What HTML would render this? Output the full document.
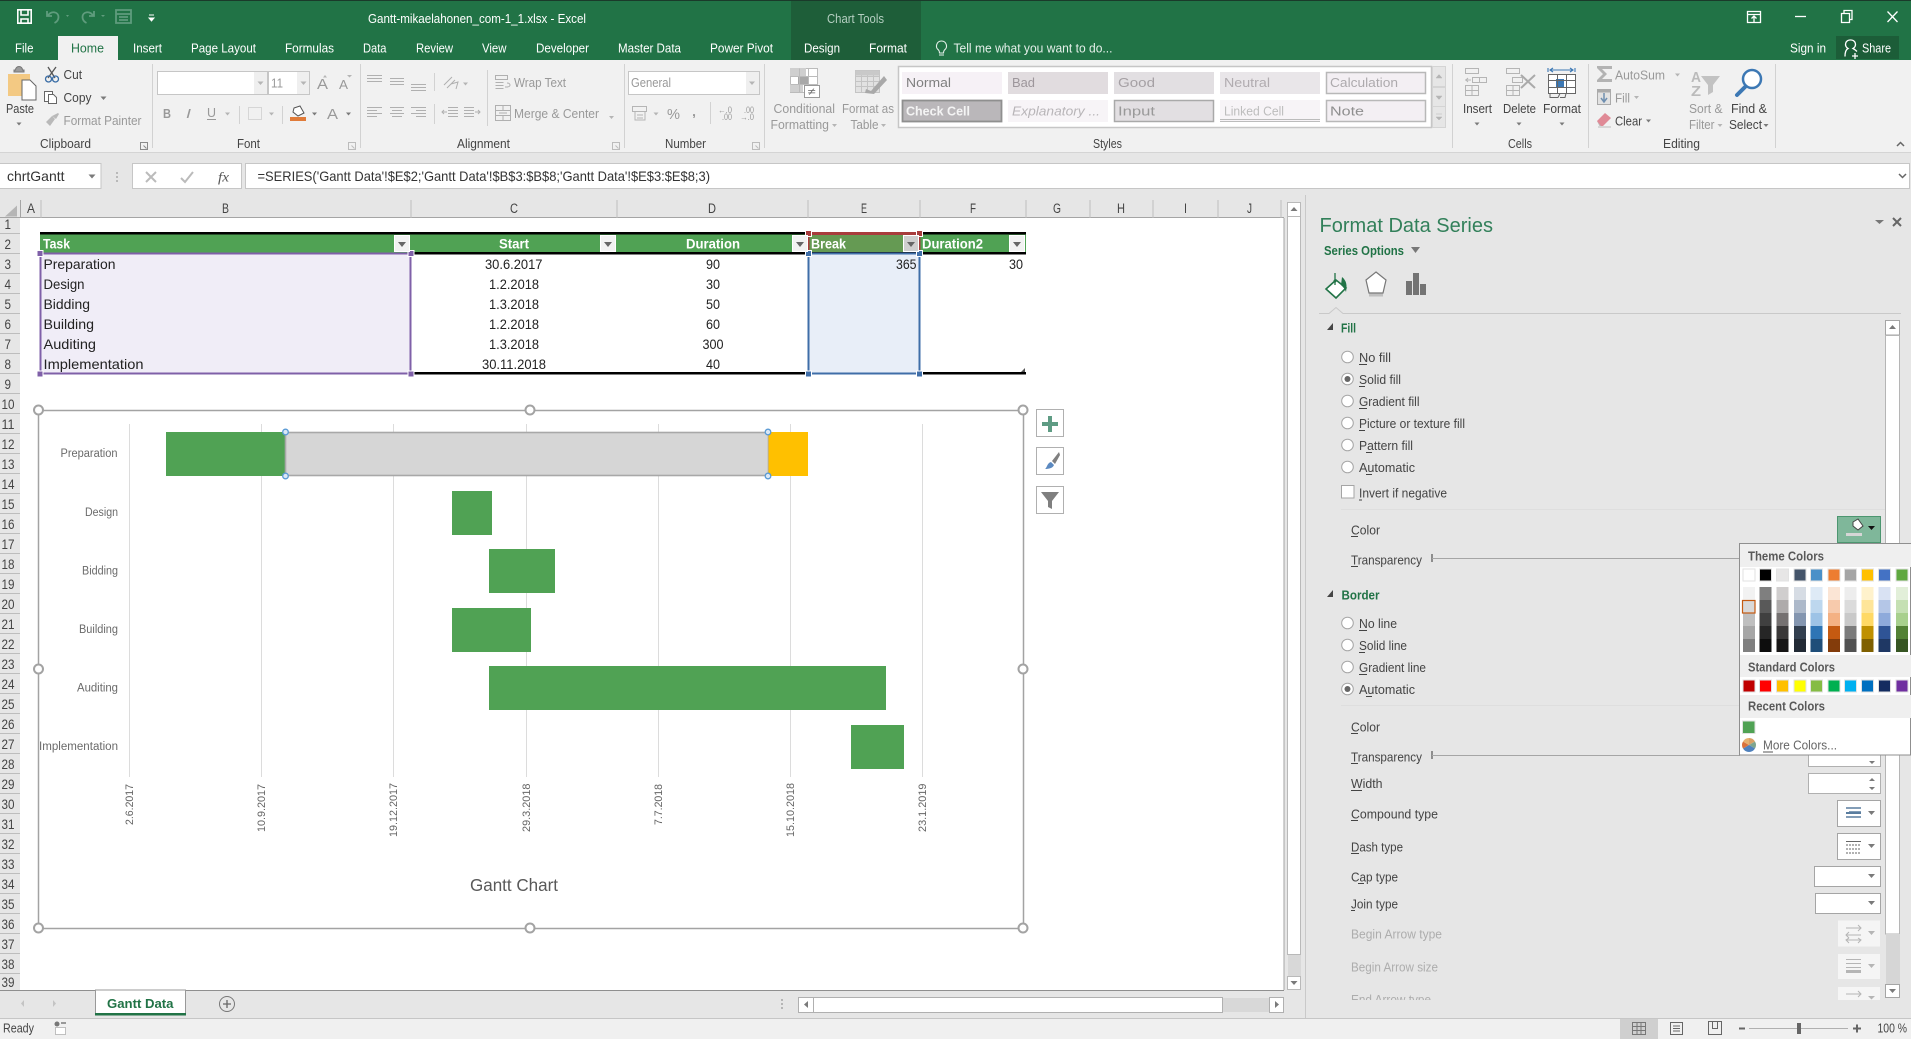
<!DOCTYPE html>
<html><head><meta charset="utf-8"><title>Gantt-mikaelahonen_com-1_1.xlsx - Excel</title>
<style>
html,body{margin:0;padding:0;background:#fff;overflow:hidden}
svg{display:block}
#root{filter:blur(.3px)}
text{font-family:"Liberation Sans",sans-serif;font-size:13px;fill:#444;white-space:pre}
.w{fill:#fff}.lg{fill:#e4efe9}.d{fill:#999}.m{fill:#666}.f{fill:#b0b0b0}
.c{font-size:14px;fill:#222}.h{font-size:14px;fill:#fff;font-weight:bold}
.r{font-size:13.5px;fill:#444}.p{font-size:12.5px;fill:#444}.pd{font-size:12.5px;fill:#adadad}
.sec{font-size:12.5px;fill:#217346;font-weight:bold}
.y{font-size:11.5px;fill:#6a6a6a}.x{font-size:11px;fill:#666}
.pop{font-size:12.5px;font-weight:bold;fill:#595959}
.ln{fill:none;stroke:#8f8f8f;stroke-width:1.2}
.ar{fill:#7a7a7a}.ad{fill:#b5b5b5}
.hd{fill:#fff;stroke:#a3a3a3;stroke-width:2}
.bh{fill:#dbe8f5;stroke:#5b9bd5;stroke-width:1.3}
.fb{fill:#f2f2f2;stroke:#fff}
</style></head><body>
<svg id="root" xmlns="http://www.w3.org/2000/svg" width="1911" height="1039" viewBox="0 0 1911 1039">
<!-- title bar -->
<rect width="1911" height="60" fill="#217346"/>
<rect width="1911" height="1" fill="#1a3a2a"/>
<rect x="791" y="1" width="130" height="59" fill="#1e5e39"/>
<rect x="58" y="36" width="60" height="24" fill="#f1f1f1"/>
<rect x="1836" y="36" width="63" height="23" fill="#1c5d38"/>
<!-- QAT -->
<g fill="none" stroke="#fff" stroke-width="1.6"><path d="M17.8 9.8h13.4v13.4h-13.4z"/><path d="M21 10v5h7v-5M21 23v-4h7v4"/></g>
<g fill="none" stroke="#5f9c7d" stroke-width="1.8"><path d="M47 11v5h5M47.500 16c4-6 11-4 11 1 0 3-2 5-4 6"/><path d="M94 11v5h-5M93.500 16c-4-6-11-4-11 1 0 3 2 5 4 6"/><path d="M116 10h15v13h-15zM116 14h15M119 17h9M119 20h9"/></g>
<path d="M66 15l3 0-1.500 2zM101 15l4 0-2 2z" fill="#5f9c7d"/>
<path d="M149 15h5M149 18h5l-2.500 3z" stroke="#fff" fill="#fff" stroke-width="1"/>
<text class="w" x="368" y="23" textLength="218" lengthAdjust="spacingAndGlyphs">Gantt-mikaelahonen_com-1_1.xlsx - Excel</text>
<text x="827" y="23" textLength="57" lengthAdjust="spacingAndGlyphs" style="fill:#b5cfc1">Chart Tools</text>
<!-- window buttons -->
<g fill="none" stroke="#fff" stroke-width="1.300"><path d="M1747.500 11.500h13v11h-13zM1747.500 14.500h13M1754 22v-6M1751.500 18.500l2.500-2.500 2.500 2.500"/><path d="M1795 16.500h11"/><path d="M1841.500 13.500h8v9h-8zM1844 13v-2.500h8v9h-2.500"/><path d="M1887.500 11.500l10 10.500M1897.500 11.500l-10 10.500"/></g>
<!-- tabs -->
<text class="w" x="15" y="52.500" textLength="18.500" lengthAdjust="spacingAndGlyphs">File</text>
<text x="71" y="52.500" textLength="33" lengthAdjust="spacingAndGlyphs" style="fill:#217346">Home</text>
<text class="w" x="133" y="52.500" textLength="29" lengthAdjust="spacingAndGlyphs">Insert</text>
<text class="w" x="191" y="52.500" textLength="65" lengthAdjust="spacingAndGlyphs">Page Layout</text>
<text class="w" x="285" y="52.500" textLength="49" lengthAdjust="spacingAndGlyphs">Formulas</text>
<text class="w" x="363" y="52.500" textLength="23.500" lengthAdjust="spacingAndGlyphs">Data</text>
<text class="w" x="416" y="52.500" textLength="37" lengthAdjust="spacingAndGlyphs">Review</text>
<text class="w" x="482" y="52.500" textLength="24.500" lengthAdjust="spacingAndGlyphs">View</text>
<text class="w" x="536" y="52.500" textLength="53" lengthAdjust="spacingAndGlyphs">Developer</text>
<text class="w" x="618" y="52.500" textLength="63" lengthAdjust="spacingAndGlyphs">Master Data</text>
<text class="w" x="710" y="52.500" textLength="63" lengthAdjust="spacingAndGlyphs">Power Pivot</text>
<text class="w" x="804" y="52.500" textLength="36" lengthAdjust="spacingAndGlyphs">Design</text>
<text class="w" x="869" y="52.500" textLength="38" lengthAdjust="spacingAndGlyphs">Format</text>
<path d="M941.500 41a5 5 0 0 1 3 9c-1 1-1 2-1 3h-4c0-1 0-2-1-3a5 5 0 0 1 3-9zM939 55h5" fill="none" stroke="#e4efe9" stroke-width="1.100"/>
<text class="lg" x="953.500" y="52.500" textLength="159" lengthAdjust="spacingAndGlyphs">Tell me what you want to do...</text>
<text class="w" x="1790" y="52.500" textLength="36" lengthAdjust="spacingAndGlyphs">Sign in</text>
<path d="M1850.500 40a4.500 4.500 0 0 1 2.500 8.500c2 1 3 2 4 3M1850.500 40a4.500 4.500 0 0 0-2.500 8.500c-2 1-3 3-3 8M1855 53v6M1852 56h6" fill="none" stroke="#fff" stroke-width="1.300"/>
<text class="w" x="1862" y="52.500" textLength="29" lengthAdjust="spacingAndGlyphs">Share</text>
<!-- ribbon -->
<rect y="60" width="1911" height="93" fill="#f1f1f1"/>
<rect y="152" width="1911" height="1" fill="#d4d4d4"/>
<g fill="#d2d2d2"><rect x="152" y="64" width="1" height="84"/><rect x="360" y="64" width="1" height="84"/><rect x="624" y="64" width="1" height="84"/><rect x="764" y="64" width="1" height="84"/><rect x="1452" y="64" width="1" height="84"/><rect x="1588" y="64" width="1" height="84"/><rect x="1775" y="64" width="1" height="84"/></g>
<g class="t" >
<text x="40" y="148" textLength="51" lengthAdjust="spacingAndGlyphs">Clipboard</text>
<text x="237" y="148" textLength="23" lengthAdjust="spacingAndGlyphs">Font</text>
<text x="457" y="148" textLength="53" lengthAdjust="spacingAndGlyphs">Alignment</text>
<text x="665" y="148" textLength="41" lengthAdjust="spacingAndGlyphs">Number</text>
<text x="1093" y="148" textLength="29" lengthAdjust="spacingAndGlyphs">Styles</text>
<text x="1508" y="148" textLength="24" lengthAdjust="spacingAndGlyphs">Cells</text>
<text x="1663" y="148" textLength="37" lengthAdjust="spacingAndGlyphs">Editing</text>
</g>
<!-- launchers -->
<g fill="none" stroke="#8a8a8a"><path d="M140.500 142.500h7v7h-7zM143.500 145.500l3 3"/></g>
<g fill="none" stroke="#bcbcbc"><path d="M348.500 142.500h7v7h-7zM351.500 145.500l3 3M612.500 142.500h7v7h-7zM615.500 145.500l3 3M752.500 142.500h7v7h-7zM755.500 145.500l3 3"/></g>
<!-- paste -->
<path d="M8 74h22v22h-22z" fill="#f3c983"/><path d="M14 72h10v-2h-1.500a3 3 0 0 0-7 0h-1.500z" fill="#9b9b9b" stroke="#777"/>
<path d="M22 80h8l6 6v14h-14z" fill="#fff" stroke="#666"/>
<text x="6" y="113" textLength="28" lengthAdjust="spacingAndGlyphs">Paste</text>
<path d="M16.500 122.500h5l-2.500 3z" class="ar"/>
<g fill="none" stroke="#555" stroke-width="1.300"><path d="M48 67l7 11M56 67l-8 11"/><circle cx="48.500" cy="79" r="3" stroke="#3a6da6"/><circle cx="55.500" cy="79" r="3" stroke="#3a6da6"/></g>
<text x="63.500" y="79" textLength="18.500" lengthAdjust="spacingAndGlyphs">Cut</text>
<g fill="#fff" stroke="#666"><path d="M44.500 91.500h8v10h-8z"/><path d="M48.500 94.500h5l3 3v6h-8z"/></g>
<text x="63.500" y="102" textLength="28" lengthAdjust="spacingAndGlyphs">Copy</text>
<path d="M100.500 96.500h6l-3 3.500z" class="ar"/>
<path d="M46 122l6-6 3 3-5 7zM52 116l6-3 1 1-3 5z" fill="#b9b9b9"/>
<text class="d" x="63.500" y="125" textLength="78" lengthAdjust="spacingAndGlyphs">Format Painter</text>
<!-- font -->
<g fill="#fff" stroke="#c6c6c6"><rect x="157.500" y="71.500" width="110" height="23"/><rect x="268.500" y="71.500" width="41" height="23"/></g>
<rect x="254" y="72" width="13" height="22" fill="#efefef"/><rect x="297" y="72" width="12" height="22" fill="#efefef"/>
<path d="M257.500 81.500h6l-3 3.500zM300.500 81.500h6l-3 3.500z" class="ad"/>
<text class="d" x="271" y="87.500" textLength="12" lengthAdjust="spacingAndGlyphs">11</text>
<text class="d" x="317" y="89" textLength="11" lengthAdjust="spacingAndGlyphs" style="font-size:15px">A</text><text class="d" x="339" y="89" textLength="9" lengthAdjust="spacingAndGlyphs">A</text>
<path d="M325 75l2 2.500h-4zM349 77l-2 2.500h-0zM347 75h5l-2.500 2.500z" class="ad"/>
<text class="d" x="163" y="118" style="font-weight:bold" textLength="8" lengthAdjust="spacingAndGlyphs">B</text>
<text class="d" x="186" y="118" style="font-style:italic" textLength="5" lengthAdjust="spacingAndGlyphs">I</text>
<text class="d" x="207" y="117" textLength="9" lengthAdjust="spacingAndGlyphs">U</text><rect x="207" y="119" width="9" height="1" fill="#999"/>
<path d="M225 112.500h5l-2.500 3zM269 112.500h5l-2.500 3z" class="ad"/>
<rect x="239" y="106" width="1" height="18" fill="#d2d2d2"/><rect x="282" y="106" width="1" height="18" fill="#d2d2d2"/>
<path d="M248.500 107.500h13v12h-13z" fill="none" stroke="#bbb" stroke-dasharray="1 1"/>
<path d="M294 108l6-2 4 7-6 3-5-4z" fill="#fff" stroke="#555"/><rect x="290" y="117" width="16" height="4" fill="#e07b39"/>
<path d="M312 112.500h5l-2.500 3z" class="ar"/>
<text class="d" x="327" y="119" textLength="11" lengthAdjust="spacingAndGlyphs" style="font-size:15px">A</text>
<path d="M346 112.500h5l-2.500 3z" class="ar"/>
<!-- alignment -->
<g stroke="#b0b0b0" stroke-width="1" fill="none">
<path d="M367 75.500h15M367 78.500h15M367 81.500h15M390 78.500h14M390 81.500h14M390 84.500h14M411 84.500h15M411 87.500h15M411 90.500h15"/>
<path d="M367 107.500h15M367 110.500h10M367 113.500h15M367 116.500h10M390 107.500h14M392 110.500h10M390 113.500h14M392 116.500h10M411 107.500h15M416 110.500h10M411 113.500h15M416 116.500h10"/>
<path d="M448 107.500h10M448 110.500h10M448 113.500h10M448 116.500h10M442 112h5M444 110l-2 2 2 2M464 107.500h10M464 110.500h10M464 113.500h10M464 116.500h10M475 112h5M478 110l2 2-2 2"/>
<path d="M495.500 75.500h12v4h-12zM495.500 82.500h8M495.500 85.500h8M495.500 88.500h8M507 83c4 0 4 4 0 4M505 87h3"/>
<path d="M495.500 105.500h15v15h-15zM495.500 110.500h15M495.500 115.500h15M503 105v5M503 115v5M499 113h8"/>
<path d="M444 85l8-8M447 88l8-8M451 84l7-2-2 7"/>
</g>
<path d="M463 82.500h5l-2.500 3zM609 116h5l-2.500 3z" class="ad"/>
<rect x="434" y="73" width="1" height="18" fill="#d2d2d2"/><rect x="434" y="104" width="1" height="20" fill="#d2d2d2"/><rect x="487" y="70" width="1" height="56" fill="#d2d2d2"/>
<text class="d" x="514" y="87" textLength="52" lengthAdjust="spacingAndGlyphs">Wrap Text</text>
<text class="d" x="514" y="118" textLength="85" lengthAdjust="spacingAndGlyphs">Merge &amp; Center</text>
<!-- number -->
<rect x="628.500" y="71.500" width="131" height="23" fill="#fff" stroke="#c6c6c6"/><rect x="746" y="72" width="13" height="22" fill="#efefef"/>
<path d="M749 81.500h6l-3 3.500z" class="ad"/>
<text class="d" x="631" y="87" textLength="40" lengthAdjust="spacingAndGlyphs">General</text>
<path d="M632.500 106.500h14v5h-14zM635 112v8h10v-8M637 115h6M637 118h6" fill="none" stroke="#b5b5b5"/>
<path d="M653.500 112.500h5l-2.500 3z" class="ad"/>
<text class="d" x="667" y="119" textLength="13" lengthAdjust="spacingAndGlyphs" style="font-size:15px">%</text>
<text class="d" x="692" y="116" style="font-weight:bold" textLength="4" lengthAdjust="spacingAndGlyphs">,</text>
<rect x="710" y="102" width="1" height="22" fill="#d2d2d2"/>
<text class="d" x="718" y="113" textLength="14" lengthAdjust="spacingAndGlyphs" style="font-size:9px">←.0</text><text class="d" x="722" y="120" textLength="10" lengthAdjust="spacingAndGlyphs" style="font-size:9px">.00</text>
<text class="d" x="744" y="113" textLength="10" lengthAdjust="spacingAndGlyphs" style="font-size:9px">.00</text><text class="d" x="740" y="120" textLength="14" lengthAdjust="spacingAndGlyphs" style="font-size:9px">→.0</text>
<!-- cond fmt -->
<g fill="#fff" stroke="#bbb"><path d="M790.500 68.500h27v24h-27z"/></g>
<path d="M790 68h16v8h-16zM798 76h11v8h-11zM790 84h13v8h-13z" fill="#cfcfcf"/><path d="M798 76h11v8h-11z" fill="#a8a8a8"/>
<path d="M790.500 76.500h27M790.500 84.500h27M799.500 68.500v24M808.500 68.500v24" stroke="#bbb" fill="none"/>
<rect x="804.500" y="85.500" width="15" height="12" fill="#fff" stroke="#999"/>
<text class="m" x="807.500" y="95" style="font-size:10px" textLength="8" lengthAdjust="spacingAndGlyphs">≠</text>
<text class="d" x="773.500" y="113" textLength="61.500" lengthAdjust="spacingAndGlyphs">Conditional</text>
<text class="d" x="770.500" y="129" textLength="58.500" lengthAdjust="spacingAndGlyphs">Formatting</text>
<path d="M832 124h5l-2.500 3zM881 124h5l-2.500 3z" class="ad"/>
<!-- format table -->
<rect x="855.500" y="70.500" width="24" height="22" fill="#e2e2e2" stroke="#c4c4c4"/>
<path d="M855.500 76.500h24M855.500 81.500h24M855.500 86.500h24M861.500 70.500v22M867.500 70.500v22M873.500 70.500v22" stroke="#c4c4c4" fill="none"/>
<rect x="855.500" y="70.500" width="24" height="5" fill="#c9c9c9"/>
<path d="M884 76l-13 15-5-2-1 4 9 1 13-14z" fill="#a9a9a9"/>
<text class="d" x="842" y="113" textLength="52" lengthAdjust="spacingAndGlyphs">Format as</text>
<text class="d" x="850.500" y="129" textLength="28" lengthAdjust="spacingAndGlyphs">Table</text>
<!-- styles gallery -->
<rect x="898.500" y="66.500" width="533" height="61" fill="#fff" stroke="#c6c6c6" stroke-width="1.500"/>
<rect x="902" y="72" width="100" height="22" fill="#f6f1f6"/>
<rect x="1008" y="72" width="100" height="22" fill="#e1dcdf"/>
<rect x="1114" y="72" width="100" height="22" fill="#e2dfe2"/>
<rect x="1220" y="72" width="100" height="22" fill="#e9e6e9"/>
<rect x="1326.500" y="72.500" width="99" height="21" fill="#f3eff3" stroke="#b8b8b8" stroke-width="1.500"/>
<rect x="902.500" y="100.500" width="99" height="21" fill="#bab7ba" stroke="#8f8f8f" stroke-width="1.800"/>
<rect x="1008" y="100" width="100" height="22" fill="#f7f4f7"/>
<rect x="1114.500" y="100.500" width="99" height="21" fill="#e2dfe2" stroke="#a9a9a9" stroke-width="1.500"/>
<rect x="1220" y="100" width="100" height="22" fill="#f7f4f7"/><path d="M1220 119.500h100M1220 121.500h100" stroke="#bcbcbc" fill="none"/>
<rect x="1326.500" y="100.500" width="99" height="21" fill="#f3eff3" stroke="#b8b8b8" stroke-width="1.500"/>
<text x="906" y="87" textLength="45" lengthAdjust="spacingAndGlyphs" style="fill:#7f7f7f">Normal</text>
<text x="1012" y="87" textLength="23" lengthAdjust="spacingAndGlyphs" style="fill:#9d969b">Bad</text>
<text x="1118" y="87" textLength="37" lengthAdjust="spacingAndGlyphs" style="fill:#a5a0a4">Good</text>
<text x="1224" y="87" textLength="46" lengthAdjust="spacingAndGlyphs" style="fill:#b1acb0">Neutral</text>
<text x="1330" y="87" textLength="68" lengthAdjust="spacingAndGlyphs" style="fill:#adaaad">Calculation</text>
<text x="906" y="115.500" textLength="64" lengthAdjust="spacingAndGlyphs" style="fill:#f4f4f4;font-weight:bold">Check Cell</text>
<text x="1012" y="115.500" textLength="88" lengthAdjust="spacingAndGlyphs" style="fill:#b8b5b8;font-style:italic">Explanatory ...</text>
<text x="1118" y="115.500" textLength="37" lengthAdjust="spacingAndGlyphs" style="fill:#999">Input</text>
<text x="1224" y="115.500" textLength="60" lengthAdjust="spacingAndGlyphs" style="fill:#bdbdbd">Linked Cell</text>
<text x="1330" y="115.500" textLength="34" lengthAdjust="spacingAndGlyphs" style="fill:#8f8f8f">Note</text>
<g fill="#e6e6e6" stroke="#d4d4d4"><rect x="1432.500" y="66.500" width="13" height="20"/><rect x="1432.500" y="87.500" width="13" height="19"/><rect x="1432.500" y="106.500" width="13" height="21"/></g>
<path d="M1436 78h6l-3-3.500zM1436 96h6l-3 3.500zM1436 114h6M1436 117h6l-3 3z" fill="#b5b5b5" stroke="#b5b5b5" stroke-width=".5"/>
<!-- cells -->
<g fill="none" stroke="#b5b5b5"><path d="M1465.500 68.500h13v5h-13zM1465.500 85.500h13v10h-13zM1465.500 90.500h13M1472 85.500v10M1472.500 77.500h14v5h-14zM1479.500 77.500v5M1465 80h6M1468 78l-2 2 2 2"/><path d="M1506.500 68.500h13v5h-13zM1506.500 85.500h13v10h-13zM1506.500 90.500h13M1513 85.500v10M1512.500 77.500h10v5h-10z"/><path d="M1521 75l14 13M1535 75l-14 13" stroke="#aaa" stroke-width="2"/></g>
<path d="M1548 68v4M1575 68v4M1550 70h23M1553 68l-3 2 3 2M1570 68l3 2-3 2" fill="none" stroke="#3c78b4" stroke-width="1.100"/>
<rect x="1548.500" y="74.500" width="27" height="19" fill="#fff"/>
<rect x="1556" y="79" width="8" height="9" fill="#3c78b4"/>
<g fill="none" stroke="#666"><path d="M1548.500 74.500h27v19h-27z"/><path d="M1548.500 80.500h27M1548.500 87.500h27M1557.500 74.500v19M1566.500 74.500v19M1550 93.500v4h8l2-4M1560 97.500h5l1-4"/></g>
<text x="1463" y="113" textLength="29" lengthAdjust="spacingAndGlyphs">Insert</text>
<text x="1503" y="113" textLength="33" lengthAdjust="spacingAndGlyphs">Delete</text>
<text x="1543" y="113" textLength="38" lengthAdjust="spacingAndGlyphs">Format</text>
<path d="M1474.500 122.500h5l-2.500 3zM1516.500 122.500h5l-2.500 3zM1559.500 122.500h5l-2.500 3z" class="ar"/>
<!-- editing -->
<path d="M1597 66h15v3h-10l5 5-5 5h10v3h-15v-2l6-6-6-6z" fill="#b3b3b3"/>
<text class="d" x="1615" y="79.500" textLength="50" lengthAdjust="spacingAndGlyphs">AutoSum</text>
<path d="M1675 73.500h5l-2.500 3zM1634 96h5l-2.500 3zM1717.500 124h5l-2.500 3z" class="ad"/>
<rect x="1597.500" y="89.500" width="13" height="15" fill="#e2e2e2" stroke="#aaa"/><rect x="1597.500" y="89.500" width="13" height="3" fill="#aaa"/><path d="M1604 93v8M1601 98l3 4 3-4" fill="none" stroke="#6f8fb0" stroke-width="1.500"/>
<text class="d" x="1615" y="102.500" textLength="15" lengthAdjust="spacingAndGlyphs">Fill</text>
<path d="M1597 121l8-8 6 5-8 8h-3z" fill="#e08a96"/><path d="M1597 121l4 5h-1.500z" fill="#bbb"/><path d="M1598 127h13" stroke="#bbb"/>
<text x="1615" y="125.500" textLength="27" lengthAdjust="spacingAndGlyphs">Clear</text>
<path d="M1646 119.500h5l-2.500 3zM1763.500 124h5l-2.500 3z" class="ar"/>
<text x="1691" y="82" textLength="10" lengthAdjust="spacingAndGlyphs" style="font-size:15px;fill:#bbb;font-weight:bold">A</text>
<text x="1691" y="96" textLength="10" lengthAdjust="spacingAndGlyphs" style="font-size:15px;fill:#bbb;font-weight:bold">Z</text>
<path d="M1701 76h19l-7 9v7l-5 3v-10z" fill="#c2c2c2"/>
<circle cx="1752" cy="79" r="9" fill="#fff" stroke="#3c78b4" stroke-width="2.500"/><path d="M1745 87l-8 8" stroke="#3c78b4" stroke-width="4" stroke-linecap="round"/>
<text class="d" x="1689" y="113" textLength="33.500" lengthAdjust="spacingAndGlyphs">Sort &amp;</text>
<text class="d" x="1689" y="129" textLength="25.500" lengthAdjust="spacingAndGlyphs">Filter</text>
<text x="1731" y="113" textLength="36" lengthAdjust="spacingAndGlyphs">Find &amp;</text>
<text x="1729" y="129" textLength="33" lengthAdjust="spacingAndGlyphs">Select</text>
<path d="M1897 146l3.500-3.500 3.500 3.500" fill="none" stroke="#666" stroke-width="1.500"/>
<!-- formula bar -->
<rect y="153" width="1911" height="42" fill="#e6e6e6"/>
<g fill="#fff" stroke="#c6c6c6"><rect x="-1" y="163.500" width="102" height="25"/><rect x="132.500" y="163.500" width="109" height="25"/><rect x="245.500" y="163.500" width="1664" height="25"/></g>
<text x="7" y="181" textLength="57.500" lengthAdjust="spacingAndGlyphs" style="font-size:14px;fill:#333">chrtGantt</text>
<path d="M88.500 174.500h7l-3.500 4z" class="ar"/>
<path d="M117 172v2M117 176v2M117 180v2" stroke="#aaa" stroke-width="1.500"/>
<path d="M146 172l10 10M156 172l-10 10M181 178l4 4 8-10" fill="none" stroke="#bbb" stroke-width="2"/>
<text x="218" y="181.500" textLength="11" lengthAdjust="spacingAndGlyphs" style="font-style:italic;font-family:'Liberation Serif',serif;font-size:14px;fill:#555">fx</text>
<text x="257.500" y="181" textLength="452.500" lengthAdjust="spacingAndGlyphs" style="font-size:14px;fill:#333">=SERIES('Gantt Data'!$E$2;'Gantt Data'!$B$3:$B$8;'Gantt Data'!$E$3:$E$8;3)</text>
<path d="M1899 174l3.500 3.500 3.500-3.500" fill="none" stroke="#666" stroke-width="1.500"/>
<!-- sheet -->
<rect y="195" width="1305" height="823" fill="#e6e6e6"/>
<rect x="20" y="218" width="1264" height="772" fill="#fff"/>
<rect x="0" y="218" width="20" height="772" fill="#e6e6e6"/>
<path d="M5 216.500l12-11v11z" fill="#b5b5b5"/>
<path d="M0 217.500h1284M20.500 200v18M1284 218v772" stroke="#a5a5a5" fill="none"/>
<path d="M41 200v18M411 200v18M617 200v18M808 200v18M920 200v18M1026 200v18M1090 200v18M1153 200v18M1218 200v18M1281 200v18" stroke="#bdbdbd" fill="none"/>
<g class="cols">
<text class="r" x="27" y="213" textLength="8" lengthAdjust="spacingAndGlyphs">A</text>
<text class="r" x="222" y="213" textLength="7" lengthAdjust="spacingAndGlyphs">B</text>
<text class="r" x="510" y="213" textLength="8" lengthAdjust="spacingAndGlyphs">C</text>
<text class="r" x="708" y="213" textLength="8" lengthAdjust="spacingAndGlyphs">D</text>
<text class="r" x="861" y="213" textLength="6" lengthAdjust="spacingAndGlyphs">E</text>
<text class="r" x="970" y="213" textLength="6" lengthAdjust="spacingAndGlyphs">F</text>
<text class="r" x="1053" y="213" textLength="8" lengthAdjust="spacingAndGlyphs">G</text>
<text class="r" x="1117" y="213" textLength="8" lengthAdjust="spacingAndGlyphs">H</text>
<text class="r" x="1184" y="213" textLength="3" lengthAdjust="spacingAndGlyphs">I</text>
<text class="r" x="1247" y="213" textLength="5" lengthAdjust="spacingAndGlyphs">J</text>
</g>
<path d="M0 233.500h20M0 253.500h20M0 273.500h20M0 293.500h20M0 313.500h20M0 333.500h20M0 353.500h20M0 373.500h20M0 393.500h20M0 413.500h20M0 433.500h20M0 453.500h20M0 473.500h20M0 493.500h20M0 513.500h20M0 533.500h20M0 553.500h20M0 573.500h20M0 593.500h20M0 613.500h20M0 633.500h20M0 653.500h20M0 673.500h20M0 693.500h20M0 713.500h20M0 733.500h20M0 753.500h20M0 773.500h20M0 793.500h20M0 813.500h20M0 833.500h20M0 853.500h20M0 873.500h20M0 893.500h20M0 913.500h20M0 933.500h20M0 953.500h20M0 973.500h20" stroke="#bdbdbd" fill="none"/>
<g>
<text class="r" x="4.500" y="229" textLength="6.500" lengthAdjust="spacingAndGlyphs">1</text>
<text class="r" x="4.500" y="249" textLength="6.500" lengthAdjust="spacingAndGlyphs">2</text>
<text class="r" x="4.500" y="269" textLength="6.500" lengthAdjust="spacingAndGlyphs">3</text>
<text class="r" x="4.500" y="289" textLength="6.500" lengthAdjust="spacingAndGlyphs">4</text>
<text class="r" x="4.500" y="309" textLength="6.500" lengthAdjust="spacingAndGlyphs">5</text>
<text class="r" x="4.500" y="329" textLength="6.500" lengthAdjust="spacingAndGlyphs">6</text>
<text class="r" x="4.500" y="349" textLength="6.500" lengthAdjust="spacingAndGlyphs">7</text>
<text class="r" x="4.500" y="369" textLength="6.500" lengthAdjust="spacingAndGlyphs">8</text>
<text class="r" x="4.500" y="389" textLength="6.500" lengthAdjust="spacingAndGlyphs">9</text>
<text class="r" x="1.500" y="409" textLength="13" lengthAdjust="spacingAndGlyphs">10</text>
<text class="r" x="1.500" y="429" textLength="13" lengthAdjust="spacingAndGlyphs">11</text>
<text class="r" x="1.500" y="449" textLength="13" lengthAdjust="spacingAndGlyphs">12</text>
<text class="r" x="1.500" y="469" textLength="13" lengthAdjust="spacingAndGlyphs">13</text>
<text class="r" x="1.500" y="489" textLength="13" lengthAdjust="spacingAndGlyphs">14</text>
<text class="r" x="1.500" y="509" textLength="13" lengthAdjust="spacingAndGlyphs">15</text>
<text class="r" x="1.500" y="529" textLength="13" lengthAdjust="spacingAndGlyphs">16</text>
<text class="r" x="1.500" y="549" textLength="13" lengthAdjust="spacingAndGlyphs">17</text>
<text class="r" x="1.500" y="569" textLength="13" lengthAdjust="spacingAndGlyphs">18</text>
<text class="r" x="1.500" y="589" textLength="13" lengthAdjust="spacingAndGlyphs">19</text>
<text class="r" x="1.500" y="609" textLength="13" lengthAdjust="spacingAndGlyphs">20</text>
<text class="r" x="1.500" y="629" textLength="13" lengthAdjust="spacingAndGlyphs">21</text>
<text class="r" x="1.500" y="649" textLength="13" lengthAdjust="spacingAndGlyphs">22</text>
<text class="r" x="1.500" y="669" textLength="13" lengthAdjust="spacingAndGlyphs">23</text>
<text class="r" x="1.500" y="689" textLength="13" lengthAdjust="spacingAndGlyphs">24</text>
<text class="r" x="1.500" y="709" textLength="13" lengthAdjust="spacingAndGlyphs">25</text>
<text class="r" x="1.500" y="729" textLength="13" lengthAdjust="spacingAndGlyphs">26</text>
<text class="r" x="1.500" y="749" textLength="13" lengthAdjust="spacingAndGlyphs">27</text>
<text class="r" x="1.500" y="769" textLength="13" lengthAdjust="spacingAndGlyphs">28</text>
<text class="r" x="1.500" y="789" textLength="13" lengthAdjust="spacingAndGlyphs">29</text>
<text class="r" x="1.500" y="809" textLength="13" lengthAdjust="spacingAndGlyphs">30</text>
<text class="r" x="1.500" y="829" textLength="13" lengthAdjust="spacingAndGlyphs">31</text>
<text class="r" x="1.500" y="849" textLength="13" lengthAdjust="spacingAndGlyphs">32</text>
<text class="r" x="1.500" y="869" textLength="13" lengthAdjust="spacingAndGlyphs">33</text>
<text class="r" x="1.500" y="889" textLength="13" lengthAdjust="spacingAndGlyphs">34</text>
<text class="r" x="1.500" y="909" textLength="13" lengthAdjust="spacingAndGlyphs">35</text>
<text class="r" x="1.500" y="929" textLength="13" lengthAdjust="spacingAndGlyphs">36</text>
<text class="r" x="1.500" y="949" textLength="13" lengthAdjust="spacingAndGlyphs">37</text>
<text class="r" x="1.500" y="969" textLength="13" lengthAdjust="spacingAndGlyphs">38</text>
<text class="r" x="1.500" y="987" textLength="13" lengthAdjust="spacingAndGlyphs">39</text>
</g>
<!-- table -->
<rect x="40" y="233" width="986" height="20" fill="#50a254"/>
<rect x="40" y="232" width="986" height="2.500" fill="#000"/>
<rect x="411" y="252" width="615" height="2.500" fill="#000"/>
<rect x="411" y="372" width="615" height="2.500" fill="#000"/>
<rect x="809" y="235" width="110" height="17" fill="#659a53"/>
<path d="M809 233.500h110" stroke="#a83c3c" stroke-width="3"/><path d="M808.500 234v19M919.500 234v19" stroke="#a83c3c" stroke-width="2"/>
<rect x="41" y="254" width="369" height="119" fill="#f0edf7"/>
<rect x="809" y="254" width="110" height="119" fill="#e8eef8"/>
<rect x="40.500" y="253.500" width="370" height="120" fill="none" stroke="#7f60a8" stroke-width="2"/>
<rect x="808.500" y="253.500" width="111" height="120" fill="none" stroke="#3f6ea8" stroke-width="2"/>
<g fill="#7f60a8" stroke="#fff"><rect x="37" y="250.500" width="6" height="6"/><rect x="408" y="250.500" width="6" height="6"/><rect x="37" y="371" width="6" height="6"/><rect x="408" y="371" width="6" height="6"/></g>
<g fill="#3f6ea8" stroke="#fff"><rect x="805.500" y="250.500" width="6" height="6"/><rect x="916.500" y="250.500" width="6" height="6"/><rect x="805.500" y="371" width="6" height="6"/><rect x="916.500" y="371" width="6" height="6"/></g>
<g fill="#a83c3c" stroke="#fff"><rect x="805.500" y="230.500" width="6" height="6"/><rect x="916.500" y="230.500" width="6" height="6"/></g>
<text class="h" x="43" y="248.500" textLength="27" lengthAdjust="spacingAndGlyphs">Task</text>
<text class="h" x="499" y="248.500" textLength="30" lengthAdjust="spacingAndGlyphs">Start</text>
<text class="h" x="686" y="248.500" textLength="54" lengthAdjust="spacingAndGlyphs">Duration</text>
<text class="h" x="811" y="248.500" textLength="35" lengthAdjust="spacingAndGlyphs">Break</text>
<text class="h" x="922" y="248.500" textLength="61" lengthAdjust="spacingAndGlyphs">Duration2</text>
<g class="fb"><rect x="394.500" y="235.500" width="15" height="16"/><rect x="600.500" y="235.500" width="15" height="16"/><rect x="792.500" y="235.500" width="15" height="16"/><rect x="903.500" y="235.500" width="15" height="16" style="fill:#cfcfcf"/><rect x="1009.500" y="235.500" width="15" height="16"/></g>
<path d="M398 242h8l-4 5zM604 242h8l-4 5zM796 242h8l-4 5zM907 242h8l-4 5zM1013 242h8l-4 5z" fill="#666"/>
<text class="c" x="43.500" y="269" textLength="72" lengthAdjust="spacingAndGlyphs">Preparation</text>
<text class="c" x="43.500" y="289" textLength="41" lengthAdjust="spacingAndGlyphs">Design</text>
<text class="c" x="43.500" y="309" textLength="46.500" lengthAdjust="spacingAndGlyphs">Bidding</text>
<text class="c" x="43.500" y="329" textLength="50.500" lengthAdjust="spacingAndGlyphs">Building</text>
<text class="c" x="43.500" y="349" textLength="52.500" lengthAdjust="spacingAndGlyphs">Auditing</text>
<text class="c" x="43.500" y="369" textLength="100" lengthAdjust="spacingAndGlyphs">Implementation</text>
<text class="c" x="485" y="269" textLength="57.500" lengthAdjust="spacingAndGlyphs">30.6.2017</text>
<text class="c" x="489" y="289" textLength="50" lengthAdjust="spacingAndGlyphs">1.2.2018</text>
<text class="c" x="489" y="309" textLength="50" lengthAdjust="spacingAndGlyphs">1.3.2018</text>
<text class="c" x="489" y="329" textLength="50" lengthAdjust="spacingAndGlyphs">1.2.2018</text>
<text class="c" x="489" y="349" textLength="50" lengthAdjust="spacingAndGlyphs">1.3.2018</text>
<text class="c" x="482" y="369" textLength="64" lengthAdjust="spacingAndGlyphs">30.11.2018</text>
<text class="c" x="706" y="269" textLength="14" lengthAdjust="spacingAndGlyphs">90</text>
<text class="c" x="706" y="289" textLength="14" lengthAdjust="spacingAndGlyphs">30</text>
<text class="c" x="706" y="309" textLength="14" lengthAdjust="spacingAndGlyphs">50</text>
<text class="c" x="706" y="329" textLength="14" lengthAdjust="spacingAndGlyphs">60</text>
<text class="c" x="702.500" y="349" textLength="21" lengthAdjust="spacingAndGlyphs">300</text>
<text class="c" x="706" y="369" textLength="14" lengthAdjust="spacingAndGlyphs">40</text>
<text class="c" x="896" y="269" textLength="20.500" lengthAdjust="spacingAndGlyphs">365</text>
<text class="c" x="1009" y="269" textLength="14" lengthAdjust="spacingAndGlyphs">30</text>
<path d="M1021 372l4-4v4z" fill="#555"/>
<!-- chart -->
<path d="M38.500 410.500h985v518h-985z" fill="#fff" stroke="#a3a3a3" stroke-width="1.500"/>
<path d="M129.500 424v353M261.500 424v353M393.500 424v353M526.500 424v353M658.500 424v353M790.500 424v353M922.500 424v353" stroke="#dcdcdc" fill="none"/>
<g fill="#50a254">
<rect x="166" y="432" width="119" height="44"/>
<rect x="452" y="491" width="40" height="44"/>
<rect x="489" y="549" width="66" height="44"/>
<rect x="452" y="608" width="79" height="44"/>
<rect x="489" y="666" width="397" height="44"/>
<rect x="851" y="725" width="53" height="44"/>
</g>
<rect x="285.500" y="432.500" width="483" height="43" fill="#d6d6d6" stroke="#a8a8a8" stroke-width="1.600"/>
<rect x="768.500" y="432" width="39.500" height="44" fill="#ffc000"/>
<circle class="bh" cx="285.500" cy="432" r="2.800"/><circle class="bh" cx="285.500" cy="476" r="2.800"/><circle class="bh" cx="768" cy="432" r="2.800"/><circle class="bh" cx="768" cy="476" r="2.800"/>
<text class="y" x="60.500" y="457" textLength="57" lengthAdjust="spacingAndGlyphs">Preparation</text>
<text class="y" x="85" y="516" textLength="33" lengthAdjust="spacingAndGlyphs">Design</text>
<text class="y" x="82" y="574.500" textLength="36" lengthAdjust="spacingAndGlyphs">Bidding</text>
<text class="y" x="79" y="633" textLength="39" lengthAdjust="spacingAndGlyphs">Building</text>
<text class="y" x="77" y="691.500" textLength="41" lengthAdjust="spacingAndGlyphs">Auditing</text>
<text class="y" x="39" y="750" textLength="79" lengthAdjust="spacingAndGlyphs">Implementation</text>
<text class="x" transform="translate(133 825) rotate(-90)" textLength="41" lengthAdjust="spacingAndGlyphs">2.6.2017</text>
<text class="x" transform="translate(265 832) rotate(-90)" textLength="48" lengthAdjust="spacingAndGlyphs">10.9.2017</text>
<text class="x" transform="translate(397 837) rotate(-90)" textLength="54" lengthAdjust="spacingAndGlyphs">19.12.2017</text>
<text class="x" transform="translate(530 832) rotate(-90)" textLength="48.500" lengthAdjust="spacingAndGlyphs">29.3.2018</text>
<text class="x" transform="translate(662 825) rotate(-90)" textLength="41" lengthAdjust="spacingAndGlyphs">7.7.2018</text>
<text class="x" transform="translate(794 837) rotate(-90)" textLength="54" lengthAdjust="spacingAndGlyphs">15.10.2018</text>
<text class="x" transform="translate(926 832) rotate(-90)" textLength="48.500" lengthAdjust="spacingAndGlyphs">23.1.2019</text>
<text x="470" y="891" textLength="88" lengthAdjust="spacingAndGlyphs" style="font-size:17.500px;fill:#595959">Gantt Chart</text>
<circle class="hd" cx="38.500" cy="410" r="4.500"/><circle class="hd" cx="530" cy="410" r="4.500"/><circle class="hd" cx="1023" cy="410" r="4.500"/><circle class="hd" cx="38.500" cy="669" r="4.500"/><circle class="hd" cx="1023" cy="669" r="4.500"/><circle class="hd" cx="38.500" cy="928" r="4.500"/><circle class="hd" cx="530" cy="928" r="4.500"/><circle class="hd" cx="1023" cy="928" r="4.500"/>
<g fill="#fff" stroke="#b0b0b0"><rect x="1036.500" y="409.500" width="27" height="27"/><rect x="1036.500" y="447.500" width="27" height="27"/><rect x="1036.500" y="486.500" width="27" height="27"/></g>
<path d="M1048 416h4v6h6v4h-6v6h-4v-6h-6v-4h6z" fill="#5f9c84"/>
<path d="M1059 452l-7 9 3 3 5-9z" fill="#7f7f7f"/><path d="M1051 462l3 3c-1 3-5 4-9 4 2-1 2-6 6-7z" fill="#5b89c0"/>
<path d="M1041 492h18l-7 9v8l-4-2v-6z" fill="#7f7f7f"/>
<!-- sheet scrollbar -->
<rect x="1287.500" y="202.500" width="13" height="14" fill="#fff" stroke="#b9b9b9"/><path d="M1290.500 211h7l-3.500-4z" class="ar"/>
<rect x="1287.500" y="216.500" width="13" height="738" fill="#fff" stroke="#b9b9b9"/>
<rect x="1288" y="955" width="13" height="22" fill="#d8d8d8"/>
<rect x="1287.500" y="976.500" width="13" height="13" fill="#fff" stroke="#b9b9b9"/><path d="M1290.500 981h7l-3.500 4z" class="ar"/>
<!-- sheet tabs -->
<rect x="20" y="990" width="1264" height="1" fill="#8f8f8f"/><rect y="990" width="20" height="1" fill="#8f8f8f"/>
<path d="M24 1000v7l-3-3.500zM53 1000v7l3-3.500z" fill="#c4c4c4"/>
<rect x="95.500" y="990" width="90" height="25" fill="#fff" stroke="#999"/>
<rect x="95" y="1013" width="91" height="2.500" fill="#217346"/>
<text x="107" y="1008" textLength="66.500" lengthAdjust="spacingAndGlyphs" style="fill:#217346;font-weight:bold">Gantt Data</text>
<circle cx="227" cy="1004" r="7.500" fill="none" stroke="#777"/><path d="M223 1004h8M227 1000v8" stroke="#666" stroke-width="1.300"/>
<path d="M782 999v2M782 1003v2M782 1007v2" stroke="#b5b5b5" stroke-width="2"/>
<rect x="798.500" y="997.500" width="15" height="15" fill="#fff" stroke="#b0b0b0"/><path d="M808 1001v7l-4-3.500z" class="ar"/>
<rect x="813.500" y="997.500" width="409" height="15" fill="#fff" stroke="#b0b0b0"/>
<rect x="1223" y="998" width="46" height="14" fill="#d8d8d8"/>
<rect x="1269.500" y="997.500" width="14" height="15" fill="#fff" stroke="#b0b0b0"/><path d="M1275 1001v7l4-3.500z" class="ar"/>
<!-- status bar -->
<rect y="1018" width="1911" height="21" fill="#f0f0f0"/>
<rect y="1018" width="1911" height="1" fill="#c6c6c6"/>
<text x="3" y="1032.500" textLength="31" lengthAdjust="spacingAndGlyphs">Ready</text>
<circle cx="57" cy="1024" r="2.500" fill="#777"/><rect x="55.500" y="1027.500" width="10" height="7" fill="#fff" stroke="#888" stroke-dasharray="1 1"/><rect x="61" y="1022" width="5" height="2" fill="#999"/>
<rect x="1620" y="1019" width="38" height="20" fill="#cfcfcf"/>
<path d="M1632.500 1022.500h13v12h-13zM1632.500 1026.500h13M1632.500 1030.500h13M1637 1022.500v12M1641 1022.500v12" fill="none" stroke="#777"/>
<path d="M1670.500 1022.500h12v12h-12zM1673 1026h7M1673 1028.500h7M1673 1031h7" fill="none" stroke="#666"/>
<path d="M1708.500 1021.500h13v13h-13zM1712.500 1021.500v7h5v-7" fill="none" stroke="#666"/>
<path d="M1739 1028.500h6" stroke="#666" stroke-width="2"/>
<path d="M1749 1028.500h99" stroke="#b0b0b0"/><rect x="1797" y="1023" width="4" height="11" fill="#666"/>
<path d="M1853 1028.500h8M1857 1024.500v8" stroke="#666" stroke-width="2"/>
<text x="1877.500" y="1032.500" textLength="29.500" lengthAdjust="spacingAndGlyphs">100 %</text>
<!-- task pane -->
<rect x="1305" y="195" width="606" height="823" fill="#e6e6e6"/>
<rect x="1305" y="195" width="1" height="823" fill="#c9c9c9"/>
<text x="1319.500" y="232" textLength="173.500" lengthAdjust="spacingAndGlyphs" style="font-size:20px;fill:#32805a">Format Data Series</text>
<path d="M1875 220h9l-4.500 4z" fill="#777"/><path d="M1893 218l8 8M1901 218l-8 8" stroke="#666" stroke-width="2"/>
<text x="1324" y="255" textLength="80" lengthAdjust="spacingAndGlyphs" style="font-size:12.500px;fill:#217346;font-weight:bold">Series Options</text>
<path d="M1411 247h9l-4.500 6z" fill="#777"/>
<path d="M1336 280l-10 9 10 9 10-10z" fill="#fff" stroke="#217346" stroke-width="1.600"/><path d="M1335 273v12" stroke="#217346" stroke-width="1.300"/><circle cx="1335" cy="281" r="1.500" fill="#217346"/><path d="M1342 277c5 4 5 9 4 15-1-3-3-5-5-7z" fill="#217346"/>
<path d="M1376 272l10 8-3 13h-14l-3-13z" fill="#fff" stroke="#777" stroke-width="1.200"/><path d="M1369 295h14" stroke="#999" stroke-width="3" opacity=".5"/>
<path d="M1406 281h6v14h-6zM1413 273h6v22h-6zM1420 284h6v11h-6z" fill="#747474"/>
<path d="M1319 313.500h10l7-6 7 6h558" fill="none" stroke="#c9c9c9"/>
<path d="M1333 323v7h-6z" fill="#444"/>
<text class="sec" x="1341" y="332.500" textLength="15" lengthAdjust="spacingAndGlyphs">Fill</text>
<g fill="#fff" stroke="#a5a5a5"><circle cx="1347.500" cy="357" r="5.800"/><circle cx="1347.500" cy="379" r="5.800"/><circle cx="1347.500" cy="401" r="5.800"/><circle cx="1347.500" cy="423" r="5.800"/><circle cx="1347.500" cy="445" r="5.800"/><circle cx="1347.500" cy="467" r="5.800"/></g>
<circle cx="1347.500" cy="379" r="3" fill="#666"/>
<text class="p" x="1359" y="362" textLength="32" lengthAdjust="spacingAndGlyphs">No fill</text>
<text class="p" x="1359" y="384" textLength="42" lengthAdjust="spacingAndGlyphs">Solid fill</text>
<text class="p" x="1359" y="406" textLength="60.500" lengthAdjust="spacingAndGlyphs">Gradient fill</text>
<text class="p" x="1359" y="428" textLength="106" lengthAdjust="spacingAndGlyphs">Picture or texture fill</text>
<text class="p" x="1359" y="450" textLength="54" lengthAdjust="spacingAndGlyphs">Pattern fill</text>
<text class="p" x="1359" y="472" textLength="56" lengthAdjust="spacingAndGlyphs">Automatic</text>
<rect x="1341.500" y="485.500" width="12.500" height="12.500" fill="#fff" stroke="#a5a5a5"/>
<text class="p" x="1359" y="497.500" textLength="88" lengthAdjust="spacingAndGlyphs">Invert if negative</text>
<path d="M1359 364.500h8M1359 386.500h6M1359 408.500h8M1359 430.500h6M1366 452.500h6M1366 474.500h6M1359 500h3M1351 536.500h7M1351 566.500h7M1359 630.500h8M1359 652.500h6M1359 674.500h8M1366 696.500h6M1351 733.500h7M1351 763.500h7M1351 790.500h11M1351 820.500h7M1351 853.500h8M1358 883.500h6M1351 910.500h4" stroke="#444" fill="none"/>
<path d="M1341 509.500h550" stroke="#dedede"/>
<text class="p" x="1351" y="534.300" textLength="29" lengthAdjust="spacingAndGlyphs">Color</text>
<rect x="1837.500" y="516.500" width="43" height="26" fill="#7fb79a" stroke="#4c9670"/>
<path d="M1853 522l5-3 5 7-5 4-5-4z" fill="#fff" stroke="#444"/><rect x="1846" y="533" width="16" height="3" fill="#d6d6d6"/><path d="M1868 526h7l-3.500 4z" fill="#111"/>
<text class="p" x="1351" y="564.300" textLength="71" lengthAdjust="spacingAndGlyphs">Transparency</text>
<path d="M1432 554v8" stroke="#777" stroke-width="1.600"/><path d="M1432 558.500h308" stroke="#a5a5a5"/>
<path d="M1333 590v7h-6z" fill="#444"/>
<text class="sec" x="1341.500" y="599.300" textLength="38" lengthAdjust="spacingAndGlyphs">Border</text>
<g fill="#fff" stroke="#a5a5a5"><circle cx="1347.500" cy="623" r="5.800"/><circle cx="1347.500" cy="645" r="5.800"/><circle cx="1347.500" cy="667" r="5.800"/><circle cx="1347.500" cy="689" r="5.800"/></g>
<circle cx="1347.500" cy="689" r="3" fill="#666"/>
<text class="p" x="1359" y="628" textLength="38" lengthAdjust="spacingAndGlyphs">No line</text>
<text class="p" x="1359" y="650" textLength="48" lengthAdjust="spacingAndGlyphs">Solid line</text>
<text class="p" x="1359" y="672" textLength="67" lengthAdjust="spacingAndGlyphs">Gradient line</text>
<text class="p" x="1359" y="694" textLength="56" lengthAdjust="spacingAndGlyphs">Automatic</text>
<path d="M1341 705.500h550" stroke="#dedede"/>
<text class="p" x="1351" y="731.300" textLength="29" lengthAdjust="spacingAndGlyphs">Color</text>
<text class="p" x="1351" y="761.300" textLength="71" lengthAdjust="spacingAndGlyphs">Transparency</text>
<path d="M1432 751v8" stroke="#777" stroke-width="1.600"/><path d="M1432 755.500h308" stroke="#a5a5a5"/>
<text class="p" x="1351" y="788" textLength="31.500" lengthAdjust="spacingAndGlyphs">Width</text>
<rect x="1808.500" y="750" width="72" height="16.500" fill="#fff" stroke="#b0b0b0"/><path d="M1869 761h6l-3 3z" class="ar"/>
<rect x="1808.500" y="773.500" width="72" height="20" fill="#fff" stroke="#b0b0b0"/><path d="M1869 781h6l-3-3zM1869 787h6l-3 3z" class="ar"/>
<text class="p" x="1351" y="818.300" textLength="87" lengthAdjust="spacingAndGlyphs">Compound type</text>
<rect x="1837.500" y="800.500" width="43" height="26" fill="#fff" stroke="#a5a5a5"/>
<path d="M1846 808h15M1849 812h12M1846 817h15" stroke="#5a7d9f" stroke-width="1.500" fill="none"/><rect x="1846" y="812" width="15" height="2" fill="#5a7d9f"/><path d="M1868 811h7l-3.500 4z" class="ar"/>
<text class="p" x="1351" y="851.300" textLength="52" lengthAdjust="spacingAndGlyphs">Dash type</text>
<rect x="1837.500" y="833.500" width="43" height="26" fill="#fff" stroke="#a5a5a5"/>
<path d="M1846 841.500h15" stroke="#666"/><path d="M1846 845h15M1846 849h15M1846 853h15" stroke="#666" stroke-dasharray="2 1"/><path d="M1868 844h7l-3.500 4z" class="ar"/>
<text class="p" x="1351" y="881.300" textLength="47" lengthAdjust="spacingAndGlyphs">Cap type</text>
<rect x="1814.500" y="866.500" width="66" height="20" fill="#fff" stroke="#a5a5a5"/><path d="M1868 874h7l-3.500 4z" class="ar"/>
<text class="p" x="1351" y="908.300" textLength="47" lengthAdjust="spacingAndGlyphs">Join type</text>
<rect x="1815.500" y="893.500" width="65" height="20" fill="#fff" stroke="#a5a5a5"/><path d="M1868 901h7l-3.500 4z" class="ar"/>
<text class="pd" x="1351" y="938.300" textLength="91" lengthAdjust="spacingAndGlyphs">Begin Arrow type</text>
<rect x="1838" y="920.500" width="42" height="26" fill="#f5f5f5"/>
<path d="M1846 928h15M1858 925l3 3-3 3M1846 935h15M1849 932l-3 3 3 3M1846 940h15M1849 938l-3 2 3 3M1858 938l3 2-3 3" fill="none" stroke="#b5b5b5"/><path d="M1868 931h7l-3.500 4z" class="ad"/>
<text class="pd" x="1351" y="971.300" textLength="87" lengthAdjust="spacingAndGlyphs">Begin Arrow size</text>
<rect x="1838" y="954" width="42" height="25" fill="#f5f5f5"/>
<path d="M1846 959.500h15M1846 963.500h15M1846 967.500h15" stroke="#b5b5b5"/><rect x="1846" y="970" width="15" height="3" fill="#b5b5b5"/><path d="M1868 964h7l-3.500 4z" class="ad"/>
<svg x="1305" y="985" width="560" height="15" viewBox="1305 985 560 15"><text class="pd" x="1351" y="1004" textLength="80" lengthAdjust="spacingAndGlyphs">End Arrow type</text></svg>
<rect x="1838" y="987" width="42" height="13" fill="#f5f5f5"/>
<path d="M1846 994h15M1858 991l3 3-3 3" fill="none" stroke="#b5b5b5"/><path d="M1868 996h7l-3.500 3.500z" class="ad"/>
<!-- pane scrollbar -->
<rect x="1885.500" y="320.500" width="14" height="14.500" fill="#fff" stroke="#a5a5a5"/><path d="M1889 329h7l-3.500-4z" class="ar"/>
<rect x="1885.500" y="335.500" width="14" height="598.500" fill="#fff" stroke="#b5b5b5"/>
<rect x="1886" y="934" width="14" height="50" fill="#d6d6d6"/>
<rect x="1885.500" y="984.500" width="14" height="13" fill="#fff" stroke="#a5a5a5"/><path d="M1889 989h7l-3.500 4z" class="ar"/>
<!-- colour popup -->
<rect x="1739.500" y="543.500" width="171" height="211.500" fill="#fff" stroke="#8f8f8f"/>
<g fill="#efefef"><rect x="1740" y="544" width="171" height="23"/><rect x="1740" y="655" width="171" height="22"/><rect x="1740" y="695" width="171" height="23"/></g>
<text class="pop" x="1748" y="560.300" textLength="76" lengthAdjust="spacingAndGlyphs">Theme Colors</text>
<text class="pop" x="1748" y="671.300" textLength="87" lengthAdjust="spacingAndGlyphs">Standard Colors</text>
<text class="pop" x="1748" y="710.600" textLength="77" lengthAdjust="spacingAndGlyphs">Recent Colors</text>
<g stroke="#e2e2e2">
<rect x="1743" y="569" width="12" height="12" fill="#fff"/><rect x="1759.500" y="569" width="12" height="12" fill="#000"/><rect x="1776.500" y="569" width="12" height="12" fill="#e7e6e6"/><rect x="1794" y="569" width="12" height="12" fill="#44546a"/><rect x="1810.500" y="569" width="12" height="12" fill="#4a90c8"/><rect x="1828" y="569" width="12" height="12" fill="#ed7d31"/><rect x="1844.500" y="569" width="12" height="12" fill="#a5a5a5"/><rect x="1861.500" y="569" width="12" height="12" fill="#ffc000"/><rect x="1878.500" y="569" width="12" height="12" fill="#4472c4"/><rect x="1896" y="569" width="12" height="12" fill="#5fa83f"/>
<rect x="1743" y="680" width="12" height="12" fill="#c00000"/><rect x="1759.500" y="680" width="12" height="12" fill="#f00"/><rect x="1776.500" y="680" width="12" height="12" fill="#ffc000"/><rect x="1794" y="680" width="12" height="12" fill="#ff0"/><rect x="1810.500" y="680" width="12" height="12" fill="#85bc45"/><rect x="1828" y="680" width="12" height="12" fill="#00b050"/><rect x="1844.500" y="680" width="12" height="12" fill="#00b0f0"/><rect x="1861.500" y="680" width="12" height="12" fill="#0070c0"/><rect x="1878.500" y="680" width="12" height="12" fill="#142c60"/><rect x="1896" y="680" width="12" height="12" fill="#7030a0"/>
<rect x="1742.500" y="721" width="12.500" height="12.500" fill="#50a254"/>
</g>
<g transform="translate(1743 587)"><rect width="12" height="13" fill="#f2f2f2"/><rect y="13" width="12" height="13" fill="#d9d9d9"/><rect y="26" width="12" height="13" fill="#bfbfbf"/><rect y="39" width="12" height="13" fill="#a6a6a6"/><rect y="52" width="12" height="13" fill="#808080"/></g>
<g transform="translate(1759.500 587)"><rect width="12" height="13" fill="#7f7f7f"/><rect y="13" width="12" height="13" fill="#595959"/><rect y="26" width="12" height="13" fill="#404040"/><rect y="39" width="12" height="13" fill="#262626"/><rect y="52" width="12" height="13" fill="#0d0d0d"/></g>
<g transform="translate(1776.500 587)"><rect width="12" height="13" fill="#d0cece"/><rect y="13" width="12" height="13" fill="#aeabab"/><rect y="26" width="12" height="13" fill="#757171"/><rect y="39" width="12" height="13" fill="#3a3838"/><rect y="52" width="12" height="13" fill="#171616"/></g>
<g transform="translate(1794 587)"><rect width="12" height="13" fill="#d6dce4"/><rect y="13" width="12" height="13" fill="#adb9ca"/><rect y="26" width="12" height="13" fill="#8496b0"/><rect y="39" width="12" height="13" fill="#323f4f"/><rect y="52" width="12" height="13" fill="#222a35"/></g>
<g transform="translate(1810.500 587)"><rect width="12" height="13" fill="#deeaf6"/><rect y="13" width="12" height="13" fill="#bdd7ee"/><rect y="26" width="12" height="13" fill="#9dc3e6"/><rect y="39" width="12" height="13" fill="#2e75b5"/><rect y="52" width="12" height="13" fill="#1f4e79"/></g>
<g transform="translate(1828 587)"><rect width="12" height="13" fill="#fbe5d5"/><rect y="13" width="12" height="13" fill="#f7caac"/><rect y="26" width="12" height="13" fill="#f4b183"/><rect y="39" width="12" height="13" fill="#c55a11"/><rect y="52" width="12" height="13" fill="#833c0b"/></g>
<g transform="translate(1844.500 587)"><rect width="12" height="13" fill="#ededed"/><rect y="13" width="12" height="13" fill="#dbdbdb"/><rect y="26" width="12" height="13" fill="#c9c9c9"/><rect y="39" width="12" height="13" fill="#7b7b7b"/><rect y="52" width="12" height="13" fill="#525252"/></g>
<g transform="translate(1861.500 587)"><rect width="12" height="13" fill="#fff2cc"/><rect y="13" width="12" height="13" fill="#fee599"/><rect y="26" width="12" height="13" fill="#ffd965"/><rect y="39" width="12" height="13" fill="#bf9000"/><rect y="52" width="12" height="13" fill="#7f6000"/></g>
<g transform="translate(1878.500 587)"><rect width="12" height="13" fill="#d9e2f3"/><rect y="13" width="12" height="13" fill="#b4c6e7"/><rect y="26" width="12" height="13" fill="#8eaadb"/><rect y="39" width="12" height="13" fill="#2f5496"/><rect y="52" width="12" height="13" fill="#1f3864"/></g>
<g transform="translate(1896 587)"><rect width="12" height="13" fill="#e2efd9"/><rect y="13" width="12" height="13" fill="#c5e0b3"/><rect y="26" width="12" height="13" fill="#a8d08d"/><rect y="39" width="12" height="13" fill="#538135"/><rect y="52" width="12" height="13" fill="#375623"/></g>
<rect x="1742.500" y="600.500" width="12.500" height="12.500" fill="#d9d9d9" stroke="#c55a11" stroke-width="1.200"/>
<path d="M1749 745v-7a7 7 0 0 1 6 3.500z" fill="#d9a066"/><path d="M1749 745l6-3.500a7 7 0 0 1 0 7z" fill="#7ea58f"/><path d="M1749 745l6 3.500a7 7 0 0 1-6 3.500z" fill="#4f81bd"/><path d="M1749 745v7a7 7 0 0 1-6-3.500z" fill="#4f81bd"/><path d="M1749 745l-6 3.500a7 7 0 0 1 0-7z" fill="#d9713c"/><path d="M1749 745l-6-3.500a7 7 0 0 1 6-3.500z" fill="#e6b06f"/>
<text class="m" x="1763" y="749.300" textLength="74" lengthAdjust="spacingAndGlyphs" style="font-size:12.500px">More Colors...</text>
<path d="M1763 752h10" stroke="#555"/>
</svg>
</body></html>
